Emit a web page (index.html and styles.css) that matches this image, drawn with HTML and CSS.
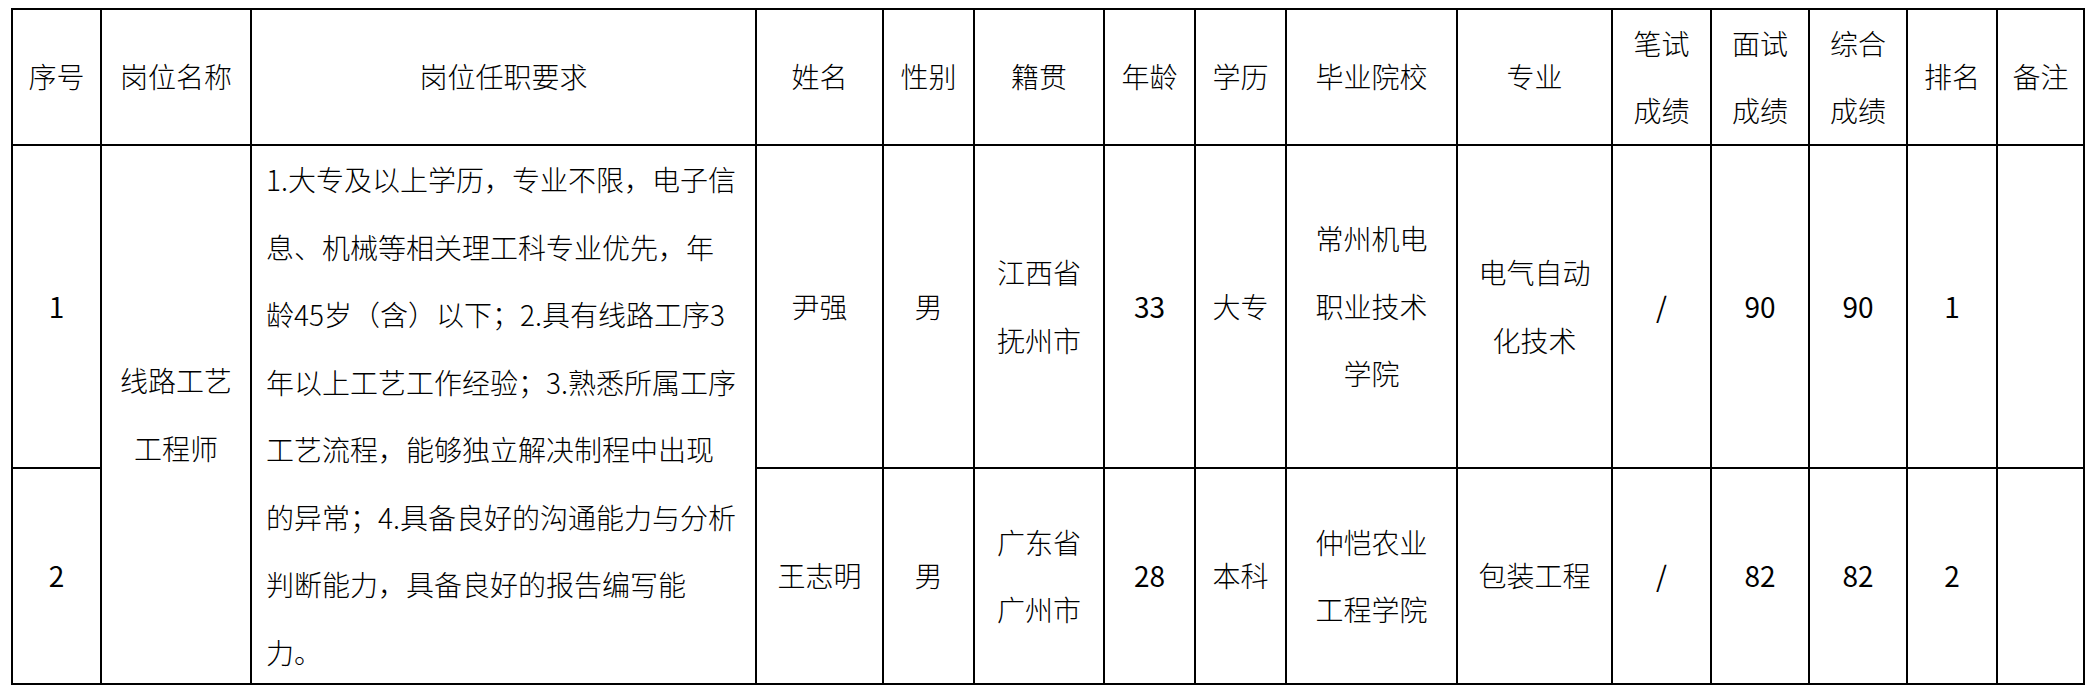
FILE: index.html
```html
<!DOCTYPE html>
<html lang="zh-CN">
<head>
<meta charset="utf-8">
<title>岗位招聘成绩表</title>
<link rel="stylesheet" href="styles.css">
</head>
<body>
<div class="sheet">
  <div class="cell">序号</div>
  <div class="cell">岗位名称</div>
  <div class="cell">岗位任职要求</div>
  <div class="cell">姓名</div>
  <div class="cell">性别</div>
  <div class="cell">籍贯</div>
  <div class="cell">年龄</div>
  <div class="cell">学历</div>
  <div class="cell">毕业院校</div>
  <div class="cell">专业</div>
  <div class="cell">笔试<br>成绩</div>
  <div class="cell">面试<br>成绩</div>
  <div class="cell">综合<br>成绩</div>
  <div class="cell">排名</div>
  <div class="cell">备注</div>

  <div class="cell num">1</div>
  <div class="cell span2">线路工艺<br>工程师</div>
  <div class="cell span2 req">1.大专及以上学历，专业不限，电子信<br>息、机械等相关理工科专业优先，年<br>龄45岁（含）以下；2.具有线路工序3<br>年以上工艺工作经验；3.熟悉所属工序<br>工艺流程，能够独立解决制程中出现<br>的异常；4.具备良好的沟通能力与分析<br>判断能力，具备良好的报告编写能<br>力。</div>
  <div class="cell">尹强</div>
  <div class="cell">男</div>
  <div class="cell">江西省<br>抚州市</div>
  <div class="cell num">33</div>
  <div class="cell">大专</div>
  <div class="cell">常州机电<br>职业技术<br>学院</div>
  <div class="cell">电气自动<br>化技术</div>
  <div class="cell num">/</div>
  <div class="cell num">90</div>
  <div class="cell num">90</div>
  <div class="cell num">1</div>
  <div class="cell"></div>

  <div class="cell num">2</div>
  <div class="cell">王志明</div>
  <div class="cell">男</div>
  <div class="cell">广东省<br>广州市</div>
  <div class="cell num">28</div>
  <div class="cell">本科</div>
  <div class="cell">仲恺农业<br>工程学院</div>
  <div class="cell">包装工程</div>
  <div class="cell num">/</div>
  <div class="cell num">82</div>
  <div class="cell num">82</div>
  <div class="cell num">2</div>
  <div class="cell"></div>
</div>
</body>
</html>
```
FILE: styles.css
```css
html, body {
  background: #ffffff;
}

body {
  margin: 8px 0 0 11px;
  font-family: "Liberation Sans Narrow", "Noto Sans CJK SC", "Noto Sans", sans-serif;
  font-size: 28px;
  color: #000000;
}

.sheet {
  display: grid;
  width: max-content;
  grid-template-columns: 89px 150px 505px 127px 91px 130px 91px 91px 171px 155px 99px 98px 98px 90px 87px;
  grid-template-rows: 136px 323px 216px;
  border-top: 2px solid #000;
  border-left: 2px solid #000;
}

.cell {
  box-sizing: border-box;
  border-right: 2px solid #000;
  border-bottom: 2px solid #000;
  display: flex;
  align-items: center;
  justify-content: center;
  text-align: center;
  line-height: 67.5px;
  font-weight: 300;
  overflow: visible;
  min-height: 0;
}

.span2 {
  grid-row: span 2;
}

.req {
  display: block;
  text-align: left;
  padding: 0 0 0 14px;
  white-space: nowrap;
}

.num {
  font-weight: 400;
}
```
